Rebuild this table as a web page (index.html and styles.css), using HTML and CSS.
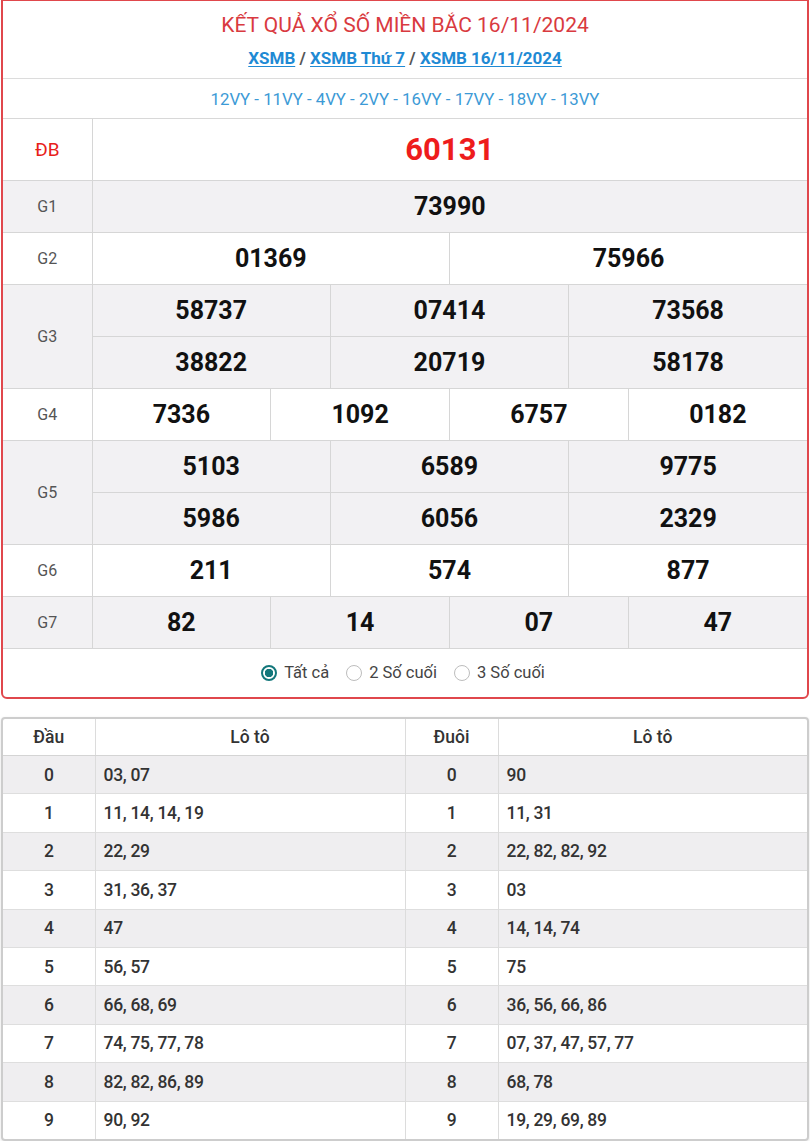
FILE: index.html
```html
<!DOCTYPE html>
<html lang="vi">
<head>
<meta charset="utf-8">
<title>XSMB 16/11/2024</title>
<link rel="stylesheet" href="styles.css">
</head>
<body>
<div class="card result">
  <div class="head">
    <h1 class="title">KẾT QUẢ XỔ SỐ MIỀN BẮC 16/11/2024</h1>
    <div class="links"><a href="#">XSMB</a> / <a href="#">XSMB Thứ 7</a> / <a href="#">XSMB 16/11/2024</a></div>
  </div>
  <div class="codes">12VY - 11VY - 4VY - 2VY - 16VY - 17VY - 18VY - 13VY</div>
  <table class="kq">
    <colgroup>
      <col class="c-label">
      <col><col><col><col><col><col><col><col><col><col><col><col>
    </colgroup>
    <tbody>
      <tr class="db"><td class="lb">ĐB</td><td colspan="12" class="num special">60131</td></tr>
      <tr class="alt"><td class="lb">G1</td><td colspan="12" class="num">73990</td></tr>
      <tr><td class="lb">G2</td><td colspan="6" class="num">01369</td><td colspan="6" class="num">75966</td></tr>
      <tr class="alt"><td class="lb" rowspan="2">G3</td><td colspan="4" class="num">58737</td><td colspan="4" class="num">07414</td><td colspan="4" class="num">73568</td></tr>
      <tr class="alt"><td colspan="4" class="num">38822</td><td colspan="4" class="num">20719</td><td colspan="4" class="num">58178</td></tr>
      <tr><td class="lb">G4</td><td colspan="3" class="num">7336</td><td colspan="3" class="num">1092</td><td colspan="3" class="num">6757</td><td colspan="3" class="num">0182</td></tr>
      <tr class="alt"><td class="lb" rowspan="2">G5</td><td colspan="4" class="num">5103</td><td colspan="4" class="num">6589</td><td colspan="4" class="num">9775</td></tr>
      <tr class="alt"><td colspan="4" class="num">5986</td><td colspan="4" class="num">6056</td><td colspan="4" class="num">2329</td></tr>
      <tr><td class="lb">G6</td><td colspan="4" class="num">211</td><td colspan="4" class="num">574</td><td colspan="4" class="num">877</td></tr>
      <tr class="alt"><td class="lb">G7</td><td colspan="3" class="num">82</td><td colspan="3" class="num">14</td><td colspan="3" class="num">07</td><td colspan="3" class="num">47</td></tr>
    </tbody>
  </table>
  <div class="filters">
    <label class="opt"><span class="radio on"></span>Tất cả</label>
    <label class="opt"><span class="radio"></span>2 Số cuối</label>
    <label class="opt"><span class="radio"></span>3 Số cuối</label>
  </div>
</div>

<div class="card loto">
  <table class="lt">
    <colgroup>
      <col class="c1"><col class="c2"><col class="c3"><col class="c4">
    </colgroup>
    <thead>
      <tr><th>Đầu</th><th>Lô tô</th><th>Đuôi</th><th>Lô tô</th></tr>
    </thead>
    <tbody>
      <tr class="alt"><td class="k">0</td><td>03, 07</td><td class="k">0</td><td>90</td></tr>
      <tr><td class="k">1</td><td>11, 14, 14, 19</td><td class="k">1</td><td>11, 31</td></tr>
      <tr class="alt"><td class="k">2</td><td>22, 29</td><td class="k">2</td><td>22, 82, 82, 92</td></tr>
      <tr><td class="k">3</td><td>31, 36, 37</td><td class="k">3</td><td>03</td></tr>
      <tr class="alt"><td class="k">4</td><td>47</td><td class="k">4</td><td>14, 14, 74</td></tr>
      <tr><td class="k">5</td><td>56, 57</td><td class="k">5</td><td>75</td></tr>
      <tr class="alt"><td class="k">6</td><td>66, 68, 69</td><td class="k">6</td><td>36, 56, 66, 86</td></tr>
      <tr><td class="k">7</td><td>74, 75, 77, 78</td><td class="k">7</td><td>07, 37, 47, 57, 77</td></tr>
      <tr class="alt"><td class="k">8</td><td>82, 82, 86, 89</td><td class="k">8</td><td>68, 78</td></tr>
      <tr><td class="k">9</td><td>90, 92</td><td class="k">9</td><td>19, 29, 69, 89</td></tr>
    </tbody>
  </table>
</div>
</body>
</html>
```

FILE: styles.css
```css
* { box-sizing: border-box; }
html, body { margin: 0; padding: 0; background: #fff; }
body {
  padding: 0 1px;
  font-family: Roboto, "Noto Sans", "Liberation Sans", sans-serif;
  color: #222;
}

.card { width: 808px; }

.result {
  border: 2px solid #e0474c;
  border-top-width: 1px;
  border-radius: 0 0 6px 6px;
  overflow: hidden;
}

.head {
  height: 78px;
  border-bottom: 1px solid #dcdcdc;
  display: flex;
  flex-direction: column;
  align-items: center;
  padding-top: 11px;
}
.title {
  margin: 0;
  font-size: 21px;
  font-weight: 400;
  color: #d93a40;
  line-height: 26px;
}
.links {
  margin-top: 10px;
  font-size: 17px;
  font-weight: 700;
  color: #555;
  line-height: 20px;
}
.links a { color: #1f8ad4; text-decoration: underline; text-underline-offset: 2px; }

.codes {
  height: 40px;
  border-bottom: 1px solid #d8d8d8;
  display: flex;
  align-items: center;
  justify-content: center;
  font-size: 16.8px;
  color: #3c9ad6;
}

.kq {
  width: 100%;
  border-collapse: collapse;
  table-layout: fixed;
}
.kq .c-label { width: 89px; }
.kq td {
  border: 1px solid #d6d6d6;
  height: 52px;
  text-align: center;
  padding: 0;
}
.kq tr:first-child td { border-top: none; }
.kq tr td:first-child.lb { border-left: none; }
.kq td:last-child { border-right: none; }
.kq tr.db td { height: 61px; }
.kq tr.alt td { background: #f2f1f3; }
.kq .lb {
  font-size: 16px;
  color: #555;
}
.kq .db .lb { color: #e8201a; font-size: 19px; }
.kq .num {
  font-size: 25px;
  font-weight: 700;
  color: #111;
}
.kq .num.special {
  font-size: 31px;
  color: #ee1c1c;
}
.kq tr:last-child td { border-bottom: 1px solid #d6d6d6; }

.filters {
  height: 48px;
  display: flex;
  align-items: center;
  justify-content: center;
  gap: 17px;
  font-size: 16.5px;
  color: #444;
  padding-right: 4px;
}
.opt { display: flex; align-items: center; gap: 7px; }
.radio {
  width: 16px;
  height: 16px;
  border-radius: 50%;
  border: 1px solid #bdbdbd;
  background: #fff;
  display: inline-block;
}
.radio.on {
  border: 2px solid #13777b;
  background: radial-gradient(circle, #13777b 0 4px, #fff 4.5px);
}

.loto {
  margin-top: 18px;
  border: 2px solid #cdcdcd;
  border-radius: 4px;
  overflow: hidden;
  box-shadow: 0 1px 3px rgba(0,0,0,0.12);
}
.lt {
  width: 100%;
  border-collapse: collapse;
  table-layout: fixed;
  font-size: 17.5px;
  font-weight: 500;
  color: #333;
}
.lt .c1 { width: 92px; }
.lt .c2 { width: 310px; }
.lt .c3 { width: 93px; }
.lt th {
  height: 37px;
  font-weight: 500;
  text-align: center;
  border-right: 1px solid #dcdcdc;
  border-bottom: 1px solid #d4d4d4;
  padding: 0;
}
.lt td {
  height: 38.4px;
  border-right: 1px solid #dcdcdc;
  border-top: 1px solid #dedede;
  padding: 0 0 0 8px;
  letter-spacing: -0.3px;
}
.lt th:last-child, .lt td:last-child { border-right: none; }
.lt td.k { text-align: center; padding: 0; }
.lt tr.alt td { background: #efeef0; }
```
